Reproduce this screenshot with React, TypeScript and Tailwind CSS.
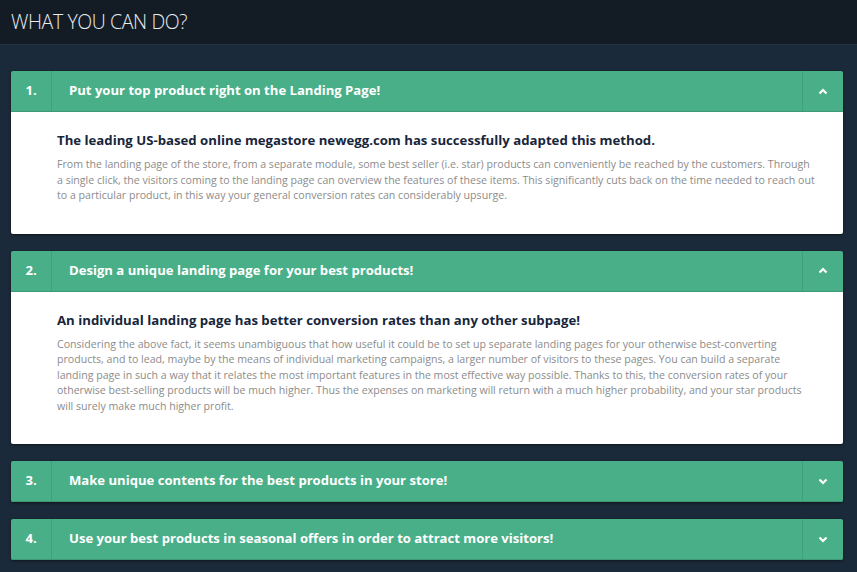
import React from 'react'

const items = [
  {
    id: 1,
    title: 'Put your top product right on the Landing Page!',
    open: true,
    heading: 'The leading US-based online megastore newegg.com has successfully adapted this method.',
    text: 'From the landing page of the store, from a separate module, some best seller (i.e. star) products can conveniently be reached by the customers. Through a single click, the visitors coming to the landing page can overview the features of these items. This significantly cuts back on the time needed to reach out to a particular product, in this way your general conversion rates can considerably upsurge.'
  },
  {
    id: 2,
    title: 'Design a unique landing page for your best products!',
    open: true,
    heading: 'An individual landing page has better conversion rates than any other subpage!',
    text: 'Considering the above fact, it seems unambiguous that how useful it could be to set up separate landing pages for your otherwise best-converting products, and to lead, maybe by the means of individual marketing campaigns, a larger number of visitors to these pages. You can build a separate landing page in such a way that it relates the most important features in the most effective way possible. Thanks to this, the conversion rates of your otherwise best-selling products will be much higher. Thus the expenses on marketing will return with a much higher probability, and your star products will surely make much higher profit.'
  },
  { id: 3, title: 'Make unique contents for the best products in your store!', open: false },
  { id: 4, title: 'Use your best products in seasonal offers in order to attract more visitors!', open: false }
]

const Chevron = ({ up }: { up: boolean }) => (
  <svg width="10" height="7" viewBox="0 0 10 7" className="text-white">
    {up ? (
      <polyline points="1.5,5.5 5,2 8.5,5.5" fill="none" stroke="currentColor" strokeWidth="2.2" />
    ) : (
      <polyline points="1.5,1.5 5,5 8.5,1.5" fill="none" stroke="currentColor" strokeWidth="2.2" />
    )}
  </svg>
)

export default function App() {
  return (
    <div className="min-h-[572px] w-full bg-[#1b2a3a] font-['Open_Sans',sans-serif]">
      <div className="flex h-[45px] items-center border-b border-[#22344a] bg-[#131b25] px-[11px]">
        <h1 className="text-[19.5px] font-light tracking-[-0.4px] text-[#e8ecef]">WHAT YOU CAN DO?</h1>
      </div>

      <div className="flex flex-col gap-[17px] pt-[26px] pr-[14px] pb-4 pl-[11px]">
        {items.map((item) => (
          <div key={item.id} className="overflow-hidden rounded-[2px] shadow-[0_1px_3px_rgba(0,0,0,0.5)]">
            <div className="flex h-[41px] items-stretch border-b border-[#3d9a75] bg-[#49af88] text-white">
              <div className="flex w-[41px] items-center justify-center border-r border-[#40a07b] text-[13.1px] font-bold">
                {item.id}.
              </div>
              <div className="flex flex-1 items-center pl-[17px] text-[13.1px] font-bold">{item.title}</div>
              <div className="flex w-[41px] items-center justify-center border-l border-[#40a07b]">
                <Chevron up={item.open} />
              </div>
            </div>
            {item.open && (
              <div className="bg-white pt-[19px] pr-[26px] pb-[30px] pl-[46px]">
                <h2 className="text-[13.2px] leading-[18px] font-bold text-[#17263a]">{item.heading}</h2>
                <p className="mt-[8px] text-[10.6px] leading-[15.5px] text-[#8c8c8c]">{item.text}</p>
              </div>
            )}
          </div>
        ))}
      </div>
    </div>
  )
}
